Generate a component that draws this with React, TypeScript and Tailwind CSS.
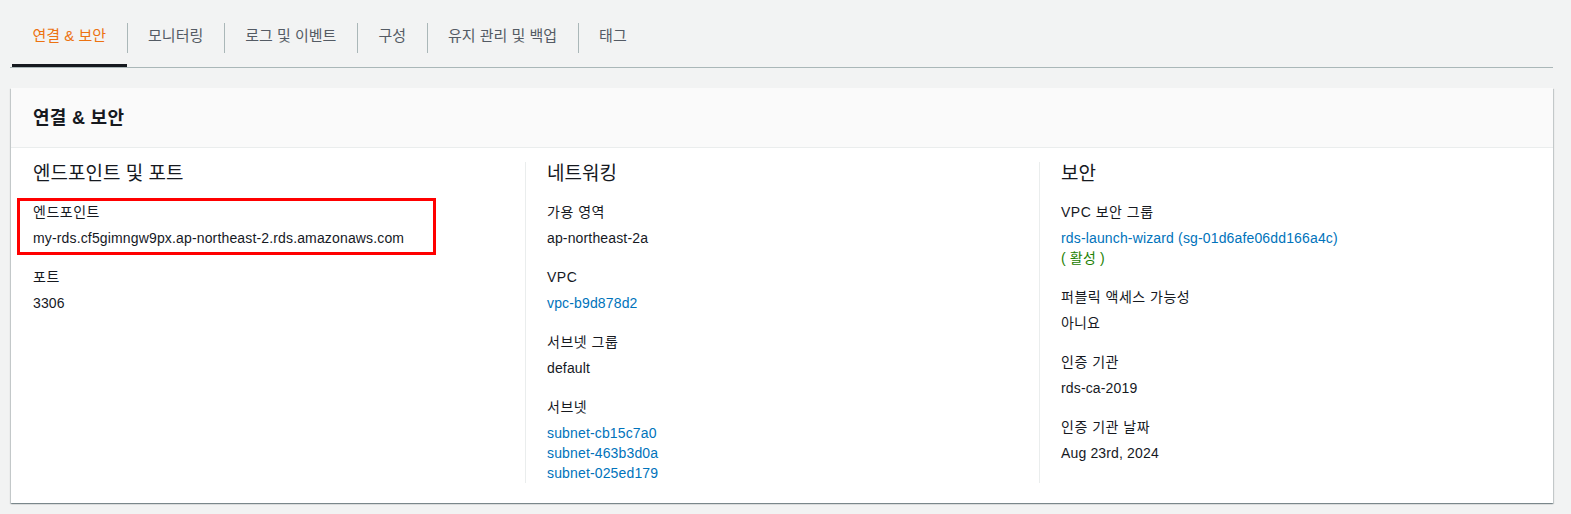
const font = "font-['Liberation_Sans','Noto_Sans_CJK_KR',sans-serif]";

type Item = { label: string; values: { text: string; kind?: "link" | "ok" }[] };

const columns: { title: string; items: Item[] }[] = [
  {
    title: "엔드포인트 및 포트",
    items: [
      { label: "엔드포인트", values: [{ text: "my-rds.cf5gimngw9px.ap-northeast-2.rds.amazonaws.com" }] },
      { label: "포트", values: [{ text: "3306" }] },
    ],
  },
  {
    title: "네트워킹",
    items: [
      { label: "가용 영역", values: [{ text: "ap-northeast-2a" }] },
      { label: "VPC", values: [{ text: "vpc-b9d878d2", kind: "link" }] },
      { label: "서브넷 그룹", values: [{ text: "default" }] },
      {
        label: "서브넷",
        values: [
          { text: "subnet-cb15c7a0", kind: "link" },
          { text: "subnet-463b3d0a", kind: "link" },
          { text: "subnet-025ed179", kind: "link" },
        ],
      },
    ],
  },
  {
    title: "보안",
    items: [
      {
        label: "VPC 보안 그룹",
        values: [
          { text: "rds-launch-wizard (sg-01d6afe06dd166a4c)", kind: "link" },
          { text: "( 활성 )", kind: "ok" },
        ],
      },
      { label: "퍼블릭 액세스 가능성", values: [{ text: "아니요" }] },
      { label: "인증 기관", values: [{ text: "rds-ca-2019" }] },
      { label: "인증 기관 날짜", values: [{ text: "Aug 23rd, 2024" }] },
    ],
  },
];

const tabs = ["연결 & 보안", "모니터링", "로그 및 이벤트", "구성", "유지 관리 및 백업", "태그"];

export default function App() {
  return (
    <div className={`${font} min-h-[514px] bg-[#f2f3f3] text-[14px] text-[#16191f]`}>
      {/* tabs */}
      <div className="ml-[10px] mr-[18px] flex h-[68px] items-stretch border-b border-[#aab7b8] pl-[2px] pt-[9px]">
        {tabs.map((t, i) => (
          <div key={t} className="flex items-center">
            {i > 0 && <div className="h-[30px] w-px bg-[#aab7b8]" />}
            <div
              className={`flex h-full items-center border-b-[3px] px-[20.5px] text-[15px] ${
                i === 0 ? "border-[#16191f] text-[#ec7211]" : "border-transparent text-[#545b64]"
              }`}
            >
              {t}
            </div>
          </div>
        ))}
      </div>

      {/* card */}
      <div className="ml-[11px] mr-[18px] mt-[20px] bg-white shadow-[0_1px_1px_0_rgba(0,28,36,0.3),1px_1px_1px_0_rgba(0,28,36,0.15),-1px_1px_1px_0_rgba(0,28,36,0.15)]">
        <div className="flex h-[60px] items-center border-b border-[#eaeded] bg-[#fafafa] px-[22px] pt-[1px]">
          <h2 className="text-[18px] font-bold leading-[22px] tracking-[0.3px]">연결 &amp; 보안</h2>
        </div>
        <div className="grid grid-cols-3 pb-[20px] pt-[14px]">
          {columns.map((col, ci) => (
            <div
              key={col.title}
              className={`relative flex flex-col pt-[1px] ${ci === 0 ? "pl-[22px]" : "border-l border-[#eaeded] pl-[21px]"}`}
            >
              <h3 className="text-[19px] font-normal leading-[22px]">{col.title}</h3>
              <div className="mt-[17px] flex flex-col gap-[19px]">
                {col.items.map((it) => (
                  <div key={it.label} className="flex flex-col">
                    <div className="leading-[20px] tracking-[0.5px]">{it.label}</div>
                    <div className="mt-[6px] flex flex-col leading-[20px] tracking-[0.15px]">
                      {it.values.map((v) => (
                        <span
                          key={v.text}
                          className={
                            v.kind === "link" ? "text-[#0073bb]" : v.kind === "ok" ? "text-[#1d8102]" : "text-[#16191f]"
                          }
                        >
                          {v.text}
                        </span>
                      ))}
                    </div>
                  </div>
                ))}
              </div>
              {ci === 0 && (
                <div className="pointer-events-none absolute left-[6px] top-[36px] h-[57px] w-[419px] border-[3px] border-[#ff0000]" />
              )}
            </div>
          ))}
        </div>
      </div>
    </div>
  );
}
